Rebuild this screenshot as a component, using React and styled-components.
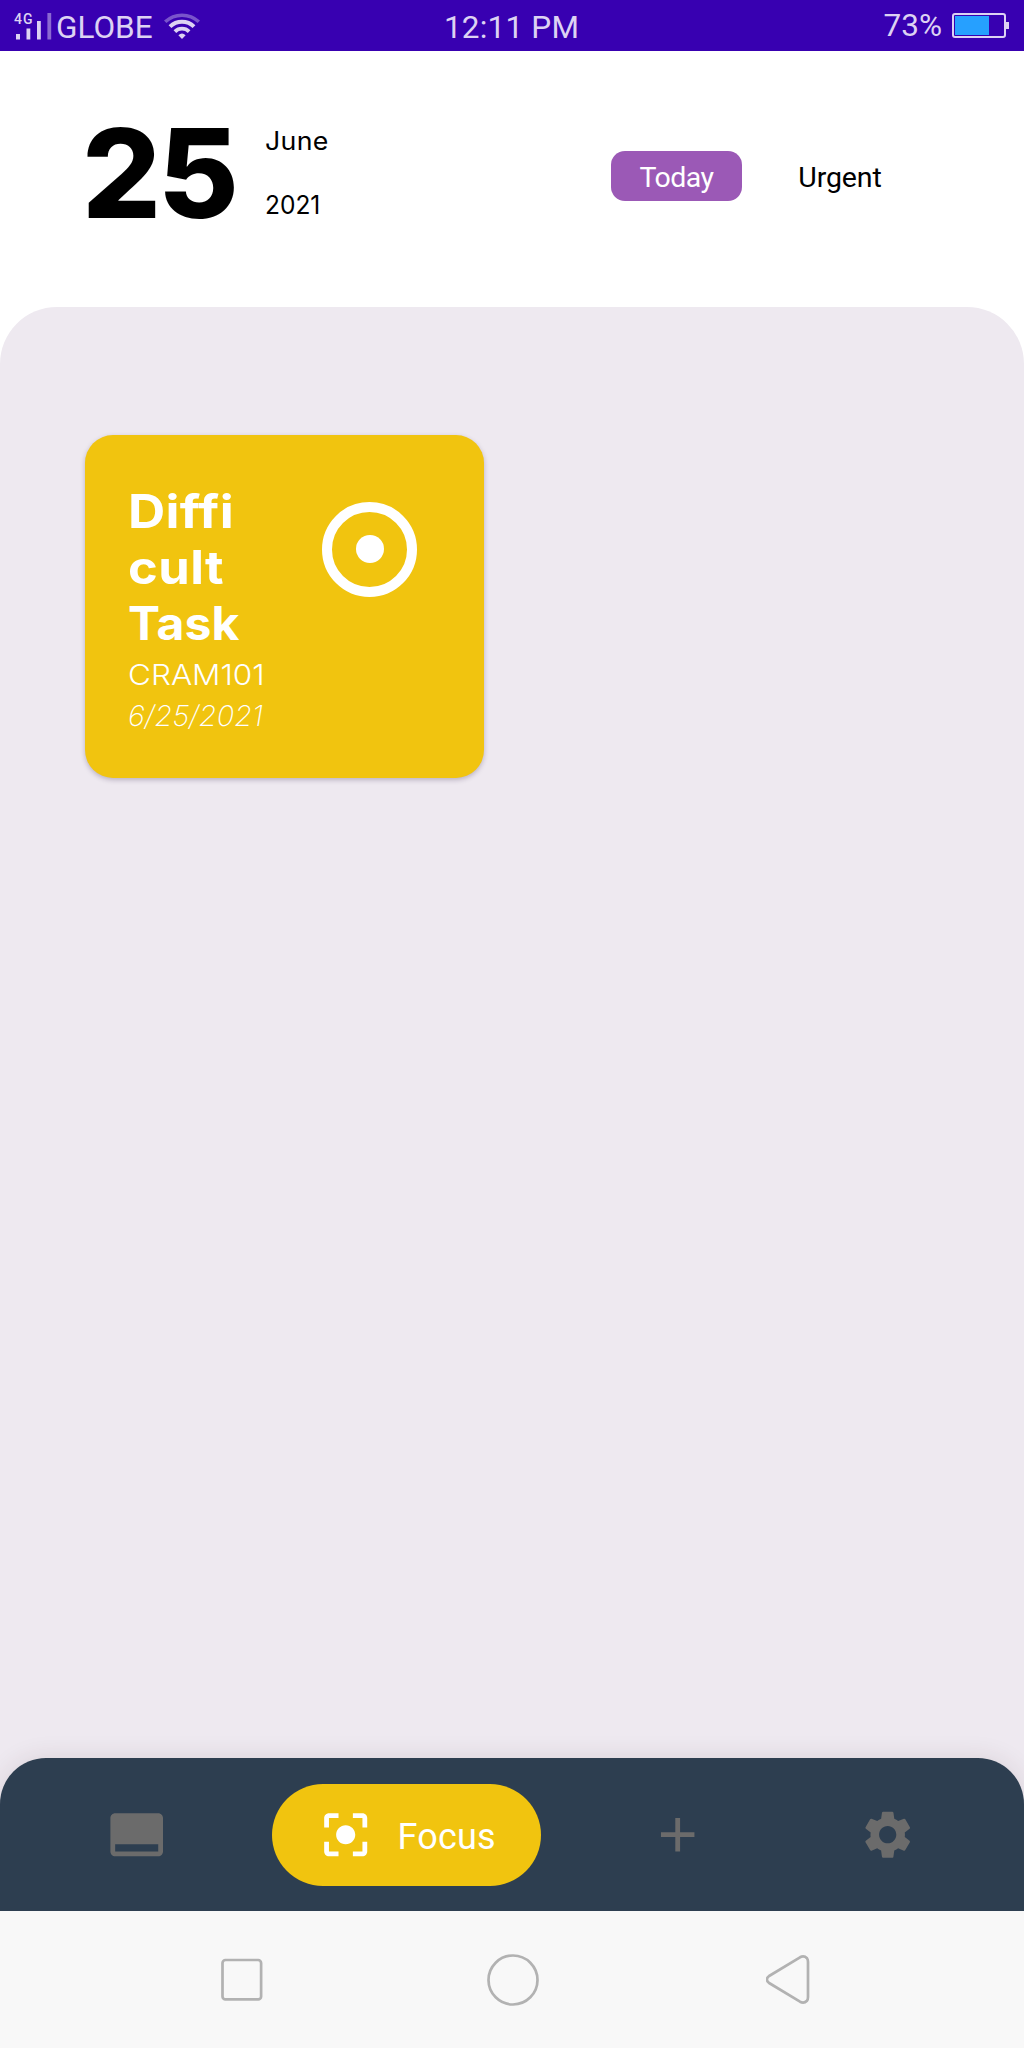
import React from "react";
import styled, { createGlobalStyle } from "styled-components";
import {
  MdAdd,
  MdCallToAction,
  MdCenterFocusStrong,
  MdSettings,
} from "react-icons/md";

const GlobalStyle = createGlobalStyle`
  *, *::before, *::after { box-sizing: border-box; }
  html, body { margin: 0; padding: 0; background: #ffffff; }
`;

const Screen = styled.div`
  width: 1024px;
  height: 2048px;
  display: flex;
  flex-direction: column;
  overflow: hidden;
  background: #ffffff;
  font-family: Roboto, "Liberation Sans", sans-serif;
`;

const StatusBar = styled.header`
  height: 51px;
  flex: none;
  display: grid;
  grid-template-columns: 1fr auto 1fr;
  align-items: center;
  padding: 0 15px 0 14px;
  background: #3800b1;
  color: #ddd2f3;
  font-size: 31.5px;
  line-height: 36px;
`;

const Carrier = styled.div`
  display: flex;
  align-items: center;
`;

const Signal = styled.div`
  width: 42px;
  height: 28px;
  margin-top: 2px;
  display: grid;
  align-items: start;
  & > * { grid-area: 1 / 1; }
`;

const NetworkType = styled.span`
  font-size: 14px;
  font-weight: 500;
  line-height: 12px;
  letter-spacing: 1px;
`;

const CarrierName = styled.span`
  padding-top: 4px;
  margin-right: 11px;
`;

const Clock = styled.span`
  padding-top: 4px;
  letter-spacing: 0.2px;
`;

const Power = styled.div`
  display: flex;
  align-items: center;
  justify-content: flex-end;
  gap: 10px;
`;

const Battery = styled.div`
  display: flex;
  align-items: center;
`;

const BatteryBody = styled.div`
  width: 54px;
  height: 25px;
  padding: 1px;
  border: 2px solid #ddd2f3;
  border-radius: 3px;
`;

const BatteryLevel = styled.div`
  width: 34px;
  height: 19px;
  background: #26a0ff;
`;

const BatteryTip = styled.div`
  width: 3px;
  height: 7px;
  background: #ddd2f3;
`;

const DateHeader = styled.section`
  height: 256px;
  flex: none;
  display: flex;
  align-items: center;
  padding: 0 113px 12px 82px;
  color: #000000;
`;

const Day = styled.div`
  width: 183px;
  font: 800 124px/150px Inter, "Liberation Sans", sans-serif;
  letter-spacing: -3px;
`;

const MonthYear = styled.div`
  display: flex;
  flex-direction: column;
  gap: 32px;
  font: 400 25px/32px Inter, "Liberation Sans", sans-serif;
`;

const DatePart = styled.span`
  letter-spacing: ${(p) => p.$tracking}px;
  transform: scaleX(${(p) => p.$stretch});
  transform-origin: left;
`;

const Filters = styled.div`
  display: flex;
  margin-left: auto;
  margin-top: 6px;
  gap: 27px;
`;

const Filter = styled.button`
  width: ${(p) => p.$width}px;
  height: 50px;
  padding: 3px 0 0;
  border: 0;
  border-radius: 14px;
  background: ${(p) => (p.$active ? "#9b59b6" : "transparent")};
  color: ${(p) => (p.$active ? "#ffffff" : "#000000")};
  font: 400 28.5px/34px Roboto, "Liberation Sans", sans-serif;
  letter-spacing: ${(p) => (p.$active ? "-0.5px" : "-0.1px")};
`;

const Panel = styled.main`
  flex: 1;
  display: flex;
  flex-direction: column;
  justify-content: space-between;
  border-radius: 57px 57px 0 0;
  background: #eee9f0;
`;

const TaskList = styled.div`
  display: flex;
  padding: 128px 85px 0;
`;

const TaskCard = styled.article`
  width: 399px;
  height: 343px;
  display: flex;
  justify-content: space-between;
  padding: 48px 67px 0 43px;
  border-radius: 28px;
  background: #f1c40f;
  color: #ffffff;
  font-family: Inter, "Liberation Sans", sans-serif;
  box-shadow: 0 2px 5px rgba(40, 20, 60, 0.26);
`;

const TaskText = styled.div`
  display: flex;
  flex-direction: column;
  align-items: flex-start;
`;

const TitleLine = styled.span`
  font-size: 46px;
  font-weight: 700;
  line-height: 56px;
  letter-spacing: ${(p) => p.$tracking || 0}px;
  transform: scaleX(${(p) => p.$stretch});
  transform-origin: left;
`;

const Course = styled.span`
  margin-top: 4px;
  font-size: 28.5px;
  font-weight: 300;
  line-height: 40.5px;
  transform: scaleX(1.105);
  transform-origin: left;
`;

const DueDate = styled.span`
  font-size: 28.5px;
  font-style: italic;
  font-weight: 250;
  line-height: 40.5px;
  transform: scaleX(1.015);
  transform-origin: left;
`;

const TargetRing = styled.div`
  width: 95px;
  height: 95px;
  margin-top: 18.5px;
  display: flex;
  align-items: center;
  justify-content: center;
  border: 10px solid #ffffff;
  border-radius: 50%;
`;

const TargetDot = styled.div`
  width: 28px;
  height: 28px;
  border-radius: 50%;
  background: #ffffff;
`;

const TabBar = styled.nav`
  height: 153px;
  display: flex;
  align-items: center;
  justify-content: space-between;
  padding: 0 108px;
  border-radius: 46px 46px 0 0;
  background: #2d3e50;
  color: #6b6b6b;
  box-shadow: 0 0 26px rgba(60, 40, 40, 0.11);
`;

const Tab = styled.button`
  display: flex;
  padding: 0;
  margin-right: ${(p) => p.$after || 0}px;
  border: 0;
  background: none;
  color: inherit;
`;

const ActiveTab = styled.button`
  width: 269px;
  height: 102px;
  display: flex;
  align-items: center;
  gap: 23px;
  padding: 0 0 0 45px;
  margin-right: 1.5px;
  border: 0;
  border-radius: 51px;
  background: #f1c40f;
  color: #ffffff;
`;

const TabLabel = styled.span`
  padding-top: 5px;
  font: 400 36px/42px Roboto, "Liberation Sans", sans-serif;
  letter-spacing: 0.2px;
`;

const SystemBar = styled.footer`
  height: 137px;
  flex: none;
  display: flex;
  align-items: center;
  justify-content: space-between;
  padding: 0 212px 0 220px;
  background: #f8f8f8;
`;

const SystemIcon = styled.svg`
  display: block;
  margin-right: ${(p) => p.$after || 0}px;
  fill: none;
  stroke: #b2b2b2;
  stroke-width: 2.7;
  stroke-linejoin: round;
`;

function SignalBars() {
  return (
    <svg width="40" height="28" viewBox="0 0 40 28" fill="#ddd2f3">
      <rect x="2" y="21" width="4" height="5.5" />
      <rect x="12.5" y="15.5" width="3.8" height="11" />
      <rect x="23" y="8" width="3.8" height="18.5" />
      <rect x="33.4" y="0" width="3.8" height="26.5" opacity="0.5" />
    </svg>
  );
}

const WifiIcon = styled.svg`
  display: block;
  margin-top: 2px;
  fill: none;
  stroke: #ddd2f3;
`;

function Wifi() {
  return (
    <WifiIcon width="36" height="28" viewBox="0 0 36 28">
      <path d="M1.2 8.8A24.6 24.6 0 0 1 34.8 8.8" strokeWidth="3.5" opacity="0.4" />
      <path d="M6 13.6A17.2 17.2 0 0 1 30 13.6" strokeWidth="4" />
      <path d="M10.9 18.6A10.2 10.2 0 0 1 25.1 18.6" strokeWidth="3.8" />
      <path d="M14.4 22.2Q18 19 21.6 22.2L18 26Z" fill="#ddd2f3" stroke="none" />
    </WifiIcon>
  );
}

const title = [
  { text: "Diffi", stretch: 1.12, tracking: 0.3 },
  { text: "cult", stretch: 1.1, tracking: 0.4 },
  { text: "Task", stretch: 1.045, tracking: 0 },
];

export default function App() {
  return (
    <Screen>
      <GlobalStyle />
      <StatusBar>
        <Carrier>
          <Signal>
            <NetworkType>4G</NetworkType>
            <SignalBars />
          </Signal>
          <CarrierName>GLOBE</CarrierName>
          <Wifi />
        </Carrier>
        <Clock>12:11 PM</Clock>
        <Power>
          <span>73%</span>
          <Battery>
            <BatteryBody>
              <BatteryLevel />
            </BatteryBody>
            <BatteryTip />
          </Battery>
        </Power>
      </StatusBar>

      <DateHeader>
        <Day>25</Day>
        <MonthYear>
          <DatePart $tracking={0.3} $stretch={1.07}>June</DatePart>
          <DatePart $tracking={0} $stretch={0.98}>2021</DatePart>
        </MonthYear>
        <Filters>
          <Filter $active $width={131}>Today</Filter>
          <Filter $width={142}>Urgent</Filter>
        </Filters>
      </DateHeader>

      <Panel>
        <TaskList>
          <TaskCard>
            <TaskText>
              {title.map((line) => (
                <TitleLine key={line.text} $stretch={line.stretch} $tracking={line.tracking}>
                  {line.text}
                </TitleLine>
              ))}
              <Course>CRAM101</Course>
              <DueDate>6/25/2021</DueDate>
            </TaskText>
            <TargetRing>
              <TargetDot />
            </TargetRing>
          </TaskCard>
        </TaskList>

        <TabBar>
          <Tab>
            <MdCallToAction size={57.4} />
          </Tab>
          <ActiveTab>
            <MdCenterFocusStrong size={57.4} />
            <TabLabel>Focus</TabLabel>
          </ActiveTab>
          <Tab $after={45}>
            <MdAdd size={57.4} />
          </Tab>
          <Tab>
            <MdSettings size={57.4} />
          </Tab>
        </TabBar>
      </Panel>

      <SystemBar>
        <SystemIcon width="44" height="52" viewBox="0 0 44 52">
          <rect x="2.5" y="6" width="38.6" height="39.4" rx="3" />
        </SystemIcon>
        <SystemIcon $after={5} width="52" height="52" viewBox="0 0 52 52">
          <circle cx="26" cy="26" r="24.5" />
        </SystemIcon>
        <SystemIcon width="46" height="52" viewBox="0 0 46 52">
          <path d="M3.1 22L34 3.3Q38 1.2 41 4.3Q42 5.6 42 8V43Q42 45.4 41 46.7Q38 49.8 34 47.7L3.1 29Q-1.3 25.5 3.1 22Z" />
        </SystemIcon>
      </SystemBar>
    </Screen>
  );
}
